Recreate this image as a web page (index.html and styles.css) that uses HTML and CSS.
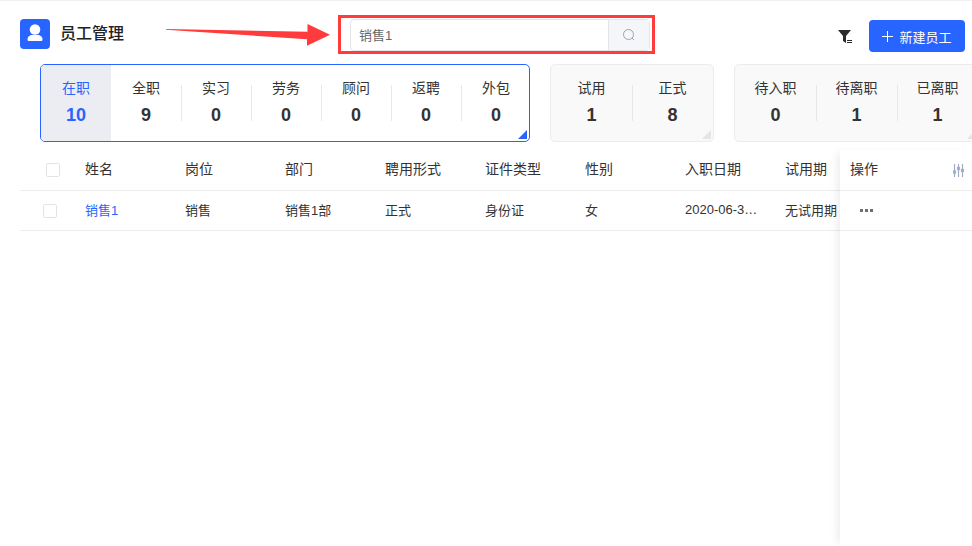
FILE: index.html
```html
<!DOCTYPE html>
<html lang="zh-CN">
<head>
<meta charset="utf-8">
<title>员工管理</title>
<link rel="stylesheet" href="styles.css">
</head>
<body>
<div class="page">
  <header class="topbar">
    <div class="brand">
      <span class="brand-icon">
        <svg width="30" height="30" viewBox="0 0 30 30"><circle cx="15" cy="10.500" r="5.300" fill="#fff"/><path d="M7.500 20.500c0-3 2.500-4.500 4.500-4.500h6c2 0 4.500 1.500 4.500 4.500 0 1-.6 1.500-1.500 1.500H9c-.9 0-1.500-.5-1.500-1.500z" fill="#fff"/></svg>
      </span>
      <h1 class="brand-title">员工管理</h1>
    </div>
    <div class="search">
      <span class="search-input">销售1</span>
      <span class="search-btn">
        <svg width="14" height="14" viewBox="0 0 14 14" fill="none" stroke="#9aa3ad" stroke-width="1"><circle cx="6.500" cy="6.500" r="5"/><path d="M10 10l2 2"/></svg>
      </span>
    </div>
    <div class="actions">
      <svg class="filter-icon" width="15" height="15" viewBox="0 0 15 15"><path d="M0 0h13L8 6v7L5 11V6z" fill="#2b2b2b"/><path d="M9 10.500h5M9 12.500h5" stroke="#2b2b2b" stroke-width="1"/></svg>
      <button class="btn-primary">
        <svg class="btn-plus" width="11" height="11" viewBox="0 0 11 11"><path d="M5.500 0v11M0 5.500h11" stroke="#fff" stroke-width="1"/></svg>
        新建员工
      </button>
    </div>
  </header>

  <section class="stats">
    <div class="card card-active">
      <div class="cell cell-active"><span class="cell-label">在职</span><b class="cell-num">10</b></div>
      <div class="cell"><span class="cell-label">全职</span><b class="cell-num">9</b></div>
      <div class="cell cell-div"><span class="cell-label">实习</span><b class="cell-num">0</b></div>
      <div class="cell cell-div"><span class="cell-label">劳务</span><b class="cell-num">0</b></div>
      <div class="cell cell-div"><span class="cell-label">顾问</span><b class="cell-num">0</b></div>
      <div class="cell cell-div"><span class="cell-label">返聘</span><b class="cell-num">0</b></div>
      <div class="cell cell-div"><span class="cell-label">外包</span><b class="cell-num">0</b></div>
    </div>
    <div class="card card-plain">
      <div class="cell cell-wide"><span class="cell-label">试用</span><b class="cell-num">1</b></div>
      <div class="cell cell-wide cell-div"><span class="cell-label">正式</span><b class="cell-num">8</b></div>
    </div>
    <div class="card card-plain">
      <div class="cell cell-wide"><span class="cell-label">待入职</span><b class="cell-num">0</b></div>
      <div class="cell cell-wide cell-div"><span class="cell-label">待离职</span><b class="cell-num">1</b></div>
      <div class="cell cell-wide cell-div"><span class="cell-label">已离职</span><b class="cell-num">1</b></div>
    </div>
  </section>

  <section class="table">
    <div class="row row-head">
      <span class="check-cell check-head"><i class="check"></i></span>
      <span class="col">姓名</span><span class="col">岗位</span><span class="col">部门</span><span class="col">聘用形式</span><span class="col">证件类型</span><span class="col">性别</span><span class="col">入职日期</span><span class="col">试用期</span>
    </div>
    <div class="row row-body">
      <span class="check-cell"><i class="check"></i></span>
      <span class="col col-link">销售1</span><span class="col">销售</span><span class="col">销售1部</span><span class="col">正式</span><span class="col">身份证</span><span class="col">女</span><span class="col">2020-06-3…</span><span class="col">无试用期</span>
    </div>
    <aside class="fixed-col">
      <div class="fixed-head"><span class="fixed-title">操作</span>
        <svg width="11" height="13" viewBox="0 0 11 13" stroke="#a3adc2" stroke-width="1.200" fill="#a3adc2"><path d="M1.500 0v13M5.500 0v13M9.500 0v13" fill="none"/><rect x=".5" y="7" width="2" height="2"/><rect x="4.500" y="3.500" width="2" height="2"/><rect x="8.500" y="5.500" width="2" height="2"/></svg>
      </div>
      <div class="fixed-body"><span class="more"><i></i><i></i><i></i></span></div>
    </aside>
  </section>

  <div class="highlight"></div>
  <svg class="arrow" width="166" height="24" viewBox="0 0 166 24"><path d="M0 5L141.500 7.700V0L164 10.700L141 21.700V15.300L0 5.800z" fill="#ff3b3b"/></svg>
</div>
</body>
</html>
```

FILE: styles.css
```css
* { box-sizing: border-box; }
html, body { margin: 0; padding: 0; background: #fff; overflow: hidden; }
body { font-family: "Liberation Sans", "Noto Sans CJK SC", sans-serif; font-size: 13px; color: #333; }

.page { position: relative; width: 972px; height: 546px; overflow: hidden; border-top: 1px solid #f1f1f1; }

.topbar { display: flex; align-items: flex-start; height: 63px; padding: 18px 7px 0 20px; }
.brand { display: flex; align-items: center; gap: 10px; width: 330px; }
.brand-icon { width: 30px; height: 30px; border-radius: 4px; background: #2864ff; display: block; }
.brand-icon svg { display: block; }
.brand-title { margin: 0; font-size: 16px; font-weight: 500; color: #222; line-height: 28px; }

.search { display: flex; width: 300px; height: 32px; border: 1px solid #e3e5e9; border-radius: 4px; }
.search-input { flex: 1; padding-left: 8px; line-height: 31px; color: #666; }
.search-btn { width: 41px; background: #f5f6f9; border-left: 1px solid #e3e5e9; display: flex; align-items: center; justify-content: center; }

.actions { display: flex; align-items: center; gap: 16px; margin-left: auto; margin-top: 1px; }
.filter-icon { display: block; margin-top: 3px; }
.btn-primary { width: 96px; height: 32px; border: 0; border-radius: 4px; background: #2864ff; color: #fff; font: inherit; padding: 0; display: flex; align-items: center; justify-content: center; gap: 6px; }
.btn-plus { display: block; flex: none; }

.stats { display: flex; gap: 20px; margin-left: 40px; width: 1000px; }
.card { display: flex; height: 78px; border-radius: 5px; position: relative; flex: none; }
.card-active { width: 490px; border: 1px solid #2864ff; background: #fff; }
.card-plain { border: 1px solid #ebecee; background: #f9f9f9; }
.card-active::after, .card-plain::after { content: ""; position: absolute; right: 2px; bottom: 2px; border-style: solid; border-width: 0 0 9px 9px; border-color: transparent transparent #2864ff transparent; }
.card-plain::after { border-bottom-color: #e3e4e6; }

.cell { position: relative; width: 70px; flex: none; display: flex; flex-direction: column; align-items: center; padding-top: 14px; }
.cell-wide { width: 81px; }
.cell-active { background: #ecedf2; border-radius: 4px 0 0 4px; color: #2864ff; }
.cell-div::before { content: ""; position: absolute; left: 0; top: 20px; height: 36px; width: 1px; background: #e8e8e8; }
.cell-label { font-size: 14px; line-height: 18px; }
.cell-num { font-size: 18px; line-height: 20px; margin-top: 8px; font-weight: 700; }

.table { position: relative; margin: 8px 0 0 20px; height: 396px; }
.row { display: flex; align-items: center; border-bottom: 1px solid #ececec; }
.row-head { height: 41px; }
.row-head .col { font-size: 14px; padding-bottom: 4px; }
.row-body { height: 40px; }
.row-body .col { padding-bottom: 2px; }
.check-cell { width: 65px; padding-left: 23px; display: block; }
.check-head { padding-left: 26px; }
.check { display: block; width: 14px; height: 14px; border: 1px solid #e3e3e3; border-radius: 2px; background: #fff; }
.col { width: 100px; flex: none; white-space: nowrap; }
.col-link { color: #2864ff; }

.fixed-col { position: absolute; left: 820px; top: 0; width: 132px; height: 100%; background: #fff; box-shadow: -6px 0 8px -3px rgba(0, 0, 0, .07); }
.fixed-head { height: 41px; padding: 0 8px 0 10px; display: flex; align-items: center; justify-content: space-between; border-bottom: 1px solid #ececec; }
.fixed-title { font-size: 14px; padding-bottom: 4px; }
.fixed-body { height: 40px; border-bottom: 1px solid #ececec; padding-left: 20px; display: flex; align-items: center; }
.more { display: flex; gap: 2px; }
.more i { display: block; width: 3px; height: 3px; background: #6f6f6f; }

.highlight { position: absolute; left: 338px; top: 14px; width: 317px; height: 39px; border: 3px solid #ff3b3b; }
.arrow { position: absolute; left: 166px; top: 23px; }
```
